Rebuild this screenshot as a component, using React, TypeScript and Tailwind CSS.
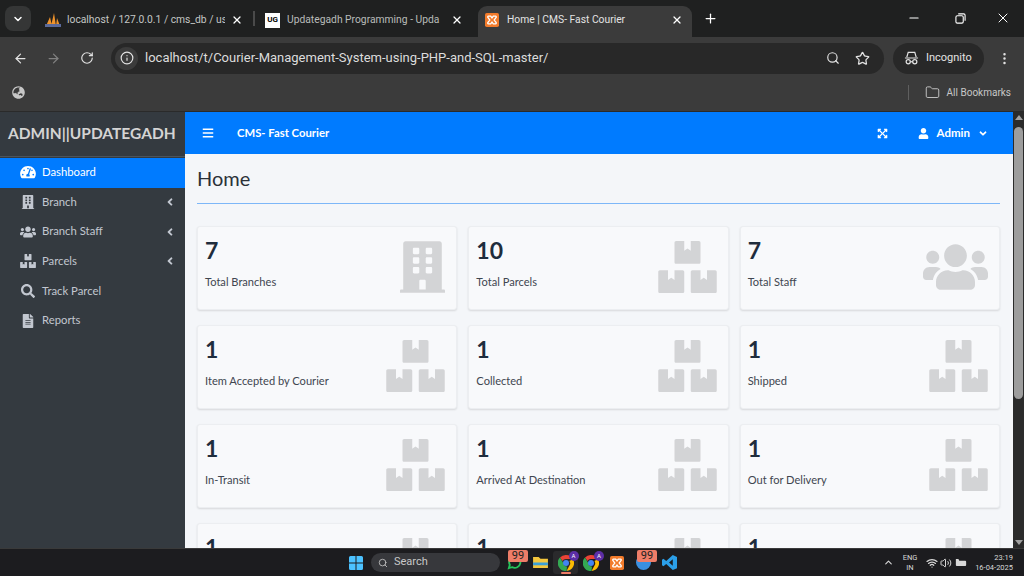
import { ArrowLeft, ArrowRight, RotateCw, Info, Search, Star, MoreVertical, X, Plus, Minus, ChevronDown, Folder, Wifi, Volume2, ChevronUp } from "lucide-react";
import {
  FaTachometerAlt,
  FaBuilding,
  FaUsers,
  FaBoxes,
  FaSearch,
  FaFileAlt,
  FaExpandArrowsAlt,
  FaUser,
  FaAngleDown,
  FaAngleLeft,
  FaBars,
  FaGlobeAsia,
} from "react-icons/fa";

const menu = [
  { label: "Dashboard", icon: FaTachometerAlt, active: true },
  { label: "Branch", icon: FaBuilding, arrow: true },
  { label: "Branch Staff", icon: FaUsers, arrow: true },
  { label: "Parcels", icon: FaBoxes, arrow: true },
  { label: "Track Parcel", icon: FaSearch },
  { label: "Reports", icon: FaFileAlt },
];

const cards = [
  { value: "7", label: "Total Branches", type: "building" },
  { value: "10", label: "Total Parcels", type: "boxes" },
  { value: "7", label: "Total Staff", type: "users" },
  { value: "1", label: "Item Accepted by Courier", type: "boxes" },
  { value: "1", label: "Collected", type: "boxes" },
  { value: "1", label: "Shipped", type: "boxes" },
  { value: "1", label: "In-Transit", type: "boxes" },
  { value: "1", label: "Arrived At Destination", type: "boxes" },
  { value: "1", label: "Out for Delivery", type: "boxes" },
  { value: "1", label: "Ready to Pickup", type: "boxes" },
  { value: "1", label: "Delivered", type: "boxes" },
  { value: "1", label: "Picked-up", type: "boxes" },
];

const XamppIcon = ({ className }: { className: string }) => (
  <svg viewBox="0 0 16 16" className={className}>
    <rect width="16" height="16" rx="2" fill="#f37b2b" />
    <path d="M4 3.5h2.5L8 5.5l1.5-2H12a1 1 0 0 1 .5 1.8L10.500 8l2 2.700A1 1 0 0 1 12 12.500H9.500L8 10.500l-1.500 2H4a1 1 0 0 1-.5-1.800L5.500 8l-2-2.700A1 1 0 0 1 4 3.500z" fill="none" stroke="#fff" strokeWidth="1.500" />
  </svg>
);

const ChromeIcon = () => (
  <div className="relative h-[16px] w-[16px]">
    <svg viewBox="0 0 16 16" className="h-[16px] w-[16px]">
      <path d="M8 0a8 8 0 0 1 7 4H8a4 4 0 0 0-3.500 2L2 2.500A8 8 0 0 1 8 0z" fill="#ea4335" />
      <path d="M15 4a8 8 0 0 1-6.500 12L11.500 10.500A4 4 0 0 0 11.500 6z" fill="#fbbc04" />
      <path d="M8.500 16A8 8 0 0 1 2 2.500l3.500 6A3.500 3.500 0 0 0 9 11.500z" fill="#34a853" />
      <circle cx="8" cy="8" r="3" fill="#4285f4" />
    </svg>
    <div className="absolute -right-[5px] -top-[4px] flex h-[10px] w-[10px] items-center justify-center rounded-full bg-[#5b2ea6] text-[6px] text-white">A</div>
  </div>
);

const Badge = () => (
  <div className="absolute -top-[5px] left-[7px] h-[12px] w-[20px] rounded-[2px] bg-[#ee7d68] text-center text-[11px] leading-[12px] text-[#222]">99</div>
);

function Tabs() {
  return (
    <div className="flex h-[37px] shrink-0 items-end bg-[#1f2020] text-[10.300px] text-[#c4c7c5]">
      <div className="mb-[6px] ml-[5px] flex h-[25px] w-[26px] shrink-0 items-center justify-center rounded-[8px] bg-[#353636]">
        <ChevronDown className="h-[12px] w-[12px] text-white" strokeWidth={3} />
      </div>
      <div className="flex h-[31px] w-[222px] shrink-0 items-center pb-[3px] pl-[14px]">
        <svg viewBox="0 0 16 14" className="h-[14px] w-[16px] shrink-0">
          <path d="M1 13 5 4l2 9zM6 13l3-13 2 13zM11 13l1-8 3 8z" fill="#f0932b" />
          <rect x="0" y="11" width="16" height="3" fill="#5b6a9a" />
        </svg>
        <span className="ml-[6px] w-[158px] overflow-hidden whitespace-nowrap">localhost / 127.0.0.1 / cms_db / use</span>
        <X className="ml-[6px] h-[12px] w-[12px] shrink-0 text-white" strokeWidth={2.500} />
      </div>
      <div className="mb-[11px] h-[15px] w-[2px] shrink-0 bg-[#4a4a4a]" />
      <div className="flex h-[31px] w-[223px] shrink-0 items-center pb-[3px] pl-[10px]">
        <div className="flex h-[15px] w-[15px] shrink-0 items-center justify-center bg-white text-[8px] font-bold leading-none text-black">UG</div>
        <span className="ml-[7px] w-[155px] overflow-hidden whitespace-nowrap text-[#b9bcba]">Updategadh Programming - Upda</span>
        <X className="ml-[9px] h-[12px] w-[12px] shrink-0 text-white" strokeWidth={2.500} />
      </div>
      <div className="flex h-[31px] w-[214px] shrink-0 items-center rounded-t-[9px] bg-[#3b3b3b] pb-[3px] pl-[7px] text-[#e3e3e3]">
        <XamppIcon className="h-[14px] w-[14px] shrink-0" />
        <span className="ml-[8px] w-[164px] overflow-hidden whitespace-nowrap">Home | CMS- Fast Courier</span>
        <X className="h-[12px] w-[12px] shrink-0 text-white" strokeWidth={2.500} />
      </div>
      <Plus className="mb-[11px] ml-[11px] h-[15px] w-[15px] shrink-0 text-white" strokeWidth={2} />
      <div className="mb-[11px] ml-auto flex items-center pr-[13px] text-white">
        <Minus className="h-[14px] w-[14px]" />
        <svg viewBox="0 0 12 12" className="ml-[34px] h-[11px] w-[11px]" fill="none" stroke="currentColor" strokeWidth="1.200">
          <rect x="1" y="3" width="8" height="8" rx="1.500" />
          <path d="M3.500 1h6a1.500 1.500 0 0 1 1.500 1.500v6" />
        </svg>
        <X className="ml-[29px] h-[16px] w-[16px]" strokeWidth={1.500} />
      </div>
    </div>
  );
}

function Toolbar() {
  return (
    <div className="flex h-[42px] shrink-0 items-center bg-[#3b3b3b] text-[#e3e3e3]">
      <ArrowLeft className="ml-[13px] h-[15px] w-[15px]" />
      <ArrowRight className="ml-[18px] h-[15px] w-[15px] text-[#808080]" />
      <RotateCw className="ml-[19px] h-[14px] w-[14px]" />
      <div className="ml-[17px] flex h-[31px] w-[773px] items-center rounded-full bg-[#282828] pl-[4px] pr-[14px]">
        <div className="flex h-[23px] w-[23px] items-center justify-center rounded-full bg-[#3b3b3b]">
          <Info className="h-[14px] w-[14px]" />
        </div>
        <span className="ml-[7px] text-[13px] text-[#dcdcdc]">localhost/t/Courier-Management-System-using-PHP-and-SQL-master/</span>
        <Search className="ml-auto h-[14px] w-[14px]" />
        <Star className="ml-[15px] h-[15px] w-[15px]" />
      </div>
      <div className="ml-[9px] flex h-[31px] w-[91px] items-center rounded-full bg-[#282828] pl-[11px] text-[11px]">
        <svg viewBox="0 0 16 14" className="h-[14px] w-[15px]" fill="none" stroke="currentColor" strokeWidth="1.300">
          <path d="M3 6 4.500 1h7L13 6M1 7h14" />
          <circle cx="4.500" cy="11" r="2.200" />
          <circle cx="11.500" cy="11" r="2.200" />
          <path d="M6.700 11h2.600" />
        </svg>
        <span className="ml-[7px] pt-[1px]">Incognito</span>
      </div>
      <MoreVertical className="ml-[13px] h-[15px] w-[15px]" />
    </div>
  );
}

function Bookmarks() {
  return (
    <div className="flex h-[33px] shrink-0 items-center border-b border-[#2a2a2a] bg-[#3b3b3b] pb-[6px] text-[#c7c7c7]">
      <FaGlobeAsia className="ml-[12px] h-[13px] w-[13px]" />
      <div className="ml-auto h-[15px] w-[1px] bg-[#5f5f5f]" />
      <Folder className="ml-[16px] h-[15px] w-[15px]" strokeWidth={1.500} />
      <span className="ml-[7px] mr-[13px] text-[10px]">All Bookmarks</span>
    </div>
  );
}

function Sidebar() {
  return (
    <aside className="flex w-[185px] shrink-0 flex-col bg-[#343a40] font-['Lato',sans-serif] shadow-[2px_0_6px_rgba(0,0,0,0.2)]">
      <div className="flex h-[45px] items-center overflow-hidden whitespace-nowrap border-b border-[#4b545c] pl-[8px] text-[15.500px] font-bold text-[#d4d4d4]">
        ADMIN||UPDATEGADH
      </div>
      <nav className="flex flex-col pt-[1px] text-[11.300px] text-[#c2c7d0]">
        {menu.map((item) => {
          const Icon = item.icon;
          return (
            <div
              key={item.label}
              className={`flex h-[29.700px] items-center pb-[1px] ${item.active ? "bg-[#007bff] text-white" : ""}`}
            >
              <div className="flex w-[42px] items-center justify-center pl-[14px]">
                <Icon className="h-[14px] w-[16px]" />
              </div>
              <span>{item.label}</span>
              {item.arrow && <FaAngleLeft className="ml-auto mr-[10px] h-[12px] w-[10px]" />}
            </div>
          );
        })}
      </nav>
    </aside>
  );
}

function Card({ value, label, type }: { value: string; label: string; type: string }) {
  return (
    <div className="flex h-[84px] items-start justify-between rounded-[3px] border border-[#eceef1] bg-[#f8f9fb] pl-[7px] pr-[11px] font-['Lato',sans-serif] shadow-[0_1px_2px_rgba(0,0,0,0.12)]">
      <div className="pt-[8px]">
        <div className="text-[23px] font-bold leading-[30px] text-[#1f2d3d]">{value}</div>
        <div className="mt-[8px] text-[11.100px] leading-[18px] text-[#3f4650]">{label}</div>
      </div>
      <div className="pt-[14px] text-[#d3d4d6]">
        {type === "building" && <FaBuilding className="h-[52px] w-[45px]" />}
        {type === "boxes" && <FaBoxes className="h-[52px] w-[59px]" />}
        {type === "users" && <FaUsers className="h-[52px] w-[65px]" />}
      </div>
    </div>
  );
}

function Scrollbar() {
  return (
    <div className="flex w-[11px] shrink-0 flex-col items-center bg-[#2b2b2b]">
      <div className="mt-[3px] h-0 w-0 border-x-[4px] border-b-[5px] border-x-transparent border-b-[#a0a0a0]" />
      <div className="mt-[7px] h-[272px] w-[9px] rounded-full bg-[#9d9d9d]" />
      <div className="mb-[3px] mt-auto h-0 w-0 border-x-[4px] border-t-[5px] border-x-transparent border-t-[#a0a0a0]" />
    </div>
  );
}

function Page() {
  return (
    <div className="flex min-h-0 flex-1 overflow-hidden">
      <Sidebar />
      <main className="flex min-w-0 flex-1 flex-col overflow-hidden bg-[#f4f6f9]">
        <header className="flex h-[42px] shrink-0 items-center bg-[#007bff] font-['Lato',sans-serif] text-white">
          <FaBars className="ml-[17px] h-[12px] w-[12px]" />
          <span className="ml-[23px] text-[11.300px] font-bold">CMS- Fast Courier</span>
          <FaExpandArrowsAlt className="ml-auto h-[11px] w-[11px]" />
          <FaUser className="ml-[30px] h-[11px] w-[11px]" />
          <span className="ml-[8px] text-[11.500px] font-bold">Admin</span>
          <FaAngleDown className="ml-[8px] mr-[25px] h-[11px] w-[10px]" />
        </header>
        <div className="px-[12px] pr-[13px]">
          <h1 className="pb-[10px] pt-[9px] font-['Lato',sans-serif] text-[20px] leading-[30px] text-[#2b3138]">Home</h1>
          <div className="h-px bg-[#7db7f8]" />
          <div className="mt-[22px] grid grid-cols-3 gap-x-[11px] gap-y-[15px]">
            {cards.map((card) => (
              <Card key={card.label} {...card} />
            ))}
          </div>
        </div>
      </main>
      <Scrollbar />
    </div>
  );
}

function Taskbar() {
  return (
    <footer className="flex h-[28px] shrink-0 items-center border-t border-[#3a3a3a] bg-[#1c1c1f] text-[#d8d8d8]">
      <svg viewBox="0 0 14 14" className="ml-[349px] h-[14px] w-[14px] shrink-0">
        <path d="M0 1.500A1.500 1.500 0 0 1 1.500 0h5v6.500H0zM7.500 0h5A1.500 1.500 0 0 1 14 1.500v5H7.500zM0 7.500h6.500V14h-5A1.500 1.500 0 0 1 0 12.500zM7.500 7.500H14v5a1.500 1.500 0 0 1-1.500 1.500h-5z" fill="#4cc2ff" />
      </svg>
      <div className="ml-[8px] flex h-[19px] w-[129px] shrink-0 items-center rounded-full bg-[#37383c] pl-[7px] text-[11px] text-[#c8c8c8]">
        <Search className="h-[10px] w-[10px]" strokeWidth={2} />
        <span className="ml-[6px]">Search</span>
      </div>
      <div className="ml-[1px] flex shrink-0 items-center">
        <div className="relative flex w-[26px] justify-center">
          <svg viewBox="0 0 16 16" className="h-[15px] w-[15px]" fill="none" stroke="#25c35a" strokeWidth="2">
            <path d="M2 14l1-3.500A6 6 0 1 1 5.500 13z" />
          </svg>
          <Badge />
        </div>
        <div className="flex w-[26px] justify-center">
          <svg viewBox="0 0 16 14" className="h-[13px] w-[15px]">
            <path d="M0 1h6l2 2h8v10H0z" fill="#f4c63d" />
            <rect x="0" y="7" width="16" height="3" fill="#3aa0d8" />
          </svg>
        </div>
        <div className="relative flex h-[23px] w-[25px] items-center justify-center rounded-[3px] bg-[#2a2a2c]">
          <ChromeIcon />
          <div className="absolute bottom-0 h-[2px] w-[10px] rounded-full bg-[#ee7d68]" />
        </div>
        <div className="flex w-[26px] justify-center">
          <ChromeIcon />
        </div>
        <div className="flex w-[26px] justify-center">
          <XamppIcon className="h-[14px] w-[14px]" />
        </div>
        <div className="relative flex w-[26px] justify-center">
          <div className="h-[15px] w-[15px] rounded-full bg-[#3a8fe0]" />
          <Badge />
        </div>
        <div className="flex w-[26px] justify-center">
          <svg viewBox="0 0 16 16" className="h-[15px] w-[15px]">
            <path d="M11.500 0 16 2v12l-4.500 2-7-6.500L1.500 12 0 11V5l1.500-1 3 2.500zM11.500 4.500 7.500 8l4 3.500z" fill="#2b9fe8" />
          </svg>
        </div>
      </div>
      <ChevronUp className="ml-[201px] h-[11px] w-[11px] shrink-0" strokeWidth={2.500} />
      <div className="ml-[6px] flex w-[20px] shrink-0 flex-col items-center text-[7.500px] leading-[10px]">
        <span>ENG</span>
        <span>IN</span>
      </div>
      <Wifi className="ml-[6px] h-[12px] w-[12px] shrink-0" strokeWidth={2.500} />
      <Volume2 className="ml-[2px] h-[12px] w-[12px] shrink-0" />
      <svg viewBox="0 0 14 10" className="ml-[3px] h-[9px] w-[12px] shrink-0" fill="currentColor">
        <path d="M1 1h3l1 2h7a1 1 0 0 1 1 1v4a1 1 0 0 1-1 1H2a1 1 0 0 1-1-1z" />
      </svg>
      <div className="ml-auto mr-[11px] flex shrink-0 flex-col items-end whitespace-nowrap text-[7.500px] leading-[10px]">
        <span>23:19</span>
        <span>16-04-2025</span>
      </div>
    </footer>
  );
}

export default function App() {
  return (
    <div className="flex h-[576px] w-[1024px] flex-col overflow-hidden font-['Roboto',sans-serif]">
      <Tabs />
      <Toolbar />
      <Bookmarks />
      <Page />
      <Taskbar />
    </div>
  );
}
